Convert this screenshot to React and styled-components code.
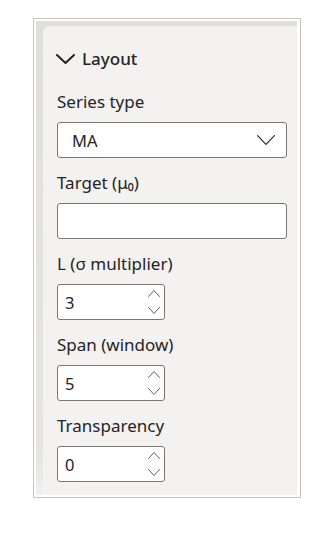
import React from "react";
import styled, { createGlobalStyle } from "styled-components";

const Global = createGlobalStyle`
  html, body { margin: 0; padding: 0; background: #ffffff; }
  body { font-family: "Noto Sans", "Open Sans", sans-serif; color: #252423; }
`;

const Page = styled.div`
  padding: 18px 0 0 33px;
`;

const Frame = styled.div`
  width: 261px;
  height: 474px;
  border: 1px solid #c8c6c4;
  padding: 2px 3px 2px 2px;
  box-sizing: content-box;
  display: flex;
  flex-direction: column;
`;

const Shade = styled.div`
  flex: 1;
  box-sizing: border-box;
  padding: 5px 0 0 7px;
  background: linear-gradient(to bottom, #e1dfdd 0%, #e6e5e4 92%, #f0f0f0 100%);
  display: flex;
  flex-direction: column;
`;

const Panel = styled.div`
  flex: 1;
  background: #f3f2f1;
  border-top-left-radius: 6px;
  padding: 21px 10px 0 14px;
  display: flex;
  flex-direction: column;
`;

const Header = styled.div`
  display: flex;
  align-items: center;
  gap: 7px;
  height: 24px;
  font-size: 17px;
  font-weight: 500;
  line-height: 24px;
  margin-left: -1px;
  margin-bottom: 20px;
`;

const Fields = styled.div`
  display: flex;
  flex-direction: column;
  gap: 14px;
`;

const Field = styled.div`
  display: flex;
  flex-direction: column;
`;

const Label = styled.div`
  font-size: 17px;
  line-height: 22px;
  margin-bottom: 9px;
  white-space: nowrap;
`;

const Box = styled.div`
  box-sizing: border-box;
  width: ${(p) => p.$w}px;
  height: ${(p) => p.$h}px;
  background: #ffffff;
  border: 1px solid #7a7876;
  border-radius: 3px;
  display: flex;
  align-items: center;
  justify-content: space-between;
  padding: 0 ${(p) => p.$pr}px 0 ${(p) => p.$pl}px;
  font-size: 16.5px;
`;

const Spin = styled.div`
  display: flex;
  flex-direction: column;
  gap: 10px;
`;

const Chevron = ({ w, h, sw, up, color = "#252423" }) => (
  <svg width={w} height={h} viewBox={`0 0 ${w} ${h}`} style={{ display: "block" }}>
    <polyline
      points={
        up
          ? `${sw / 2},${h - sw / 2} ${w / 2},${sw / 2} ${w - sw / 2},${h - sw / 2}`
          : `${sw / 2},${sw / 2} ${w / 2},${h - sw / 2} ${w - sw / 2},${sw / 2}`
      }
      fill="none"
      stroke={color}
      strokeWidth={sw}
      strokeLinecap="round"
      strokeLinejoin="round"
    />
  </svg>
);

const NumberBox = ({ value }) => (
  <Box $w={108} $h={36} $pl={7} $pr={4}>
    <span>{value}</span>
    <Spin>
      <Chevron w={12} h={7} sw={1} up color="#605e5c" />
      <Chevron w={12} h={7} sw={1} color="#605e5c" />
    </Spin>
  </Box>
);

export default function App() {
  return (
    <>
      <Global />
      <Page>
        <Frame>
          <Shade>
            <Panel>
              <Header>
                <Chevron w={19} h={10} sw={2} />
                <span>Layout</span>
              </Header>
              <Fields>
                <Field>
                  <Label>Series type</Label>
                  <Box $w={230} $h={36} $pl={14} $pr={11}>
                    <span>MA</span>
                    <Chevron w={18} h={10} sw={1.1} />
                  </Box>
                </Field>
                <Field>
                  <Label>Target (μ₀)</Label>
                  <Box $w={230} $h={36} $pl={14} $pr={11} />
                </Field>
                <Field>
                  <Label>L (σ multiplier)</Label>
                  <NumberBox value="3" />
                </Field>
                <Field>
                  <Label>Span (window)</Label>
                  <NumberBox value="5" />
                </Field>
                <Field>
                  <Label>Transparency</Label>
                  <NumberBox value="0" />
                </Field>
              </Fields>
            </Panel>
          </Shade>
        </Frame>
      </Page>
    </>
  );
}
